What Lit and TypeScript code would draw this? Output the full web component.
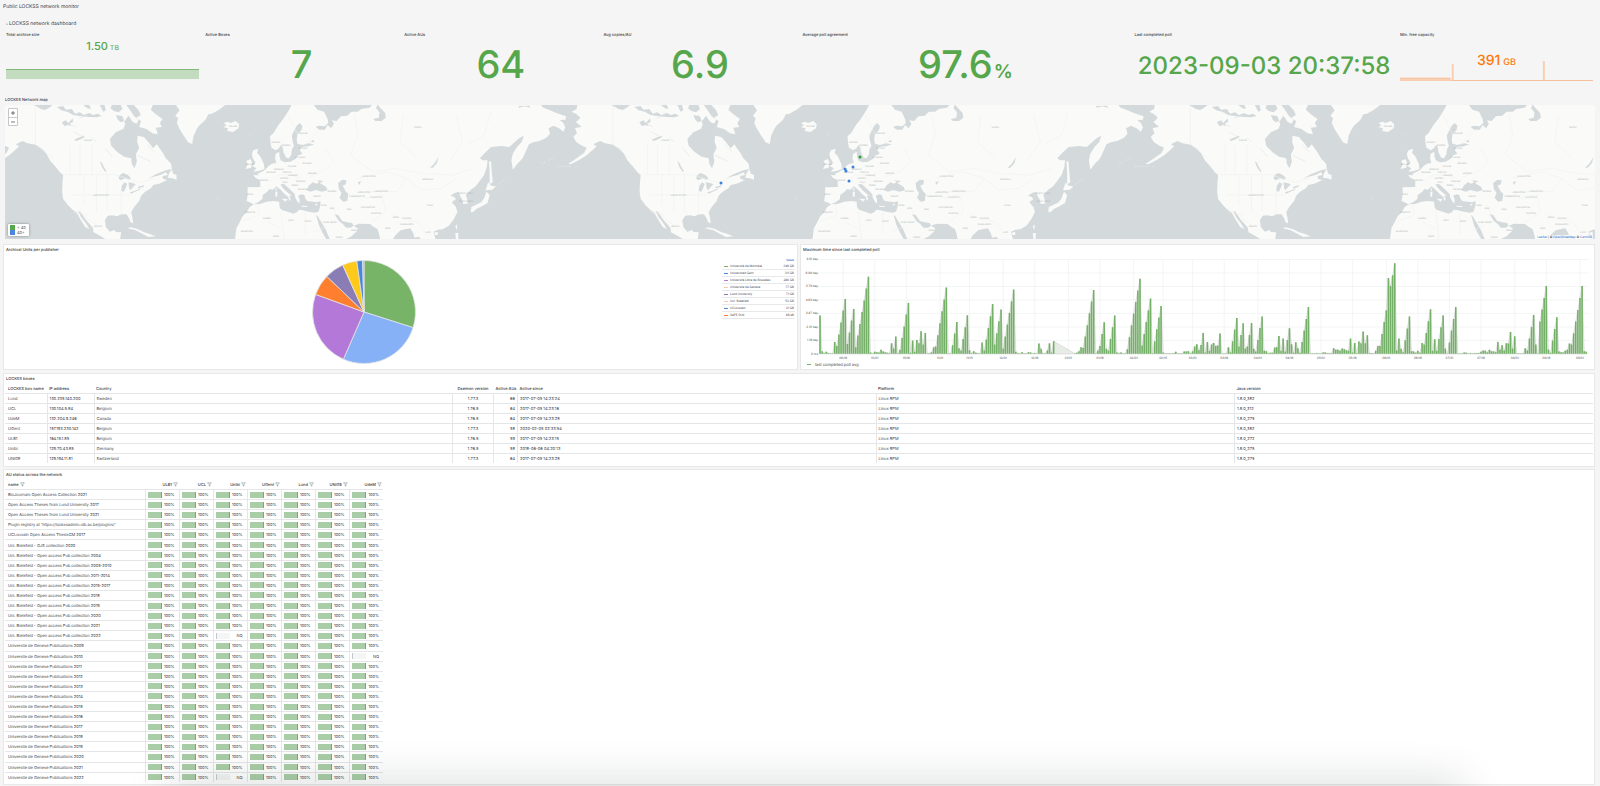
import { LitElement, html, svg, css } from "lit";
import { customElement, property } from "lit/decorators.js";

/* ---------- data ---------- */

const boxes = [
  ["Lund", "130.235.140.200", "Sweden", "1.77.3", "66", "2017-07-05 14:23:24", "Linux RPM", "1.8.0_382"],
  ["UCL", "130.104.5.84", "Belgium", "1.76.5", "64", "2017-07-05 14:23:16", "Linux RPM", "1.8.0_312"],
  ["UdeM", "132.204.9.246", "Canada", "1.76.5", "64", "2017-07-05 14:23:28", "Linux RPM", "1.8.0_275"],
  ["UGent", "157.193.230.142", "Belgium", "1.77.3", "58", "2020-02-05 02:33:54", "Linux RPM", "1.8.0_382"],
  ["ULB1", "164.15.1.85", "Belgium", "1.76.5", "59", "2017-07-05 14:23:15", "Linux RPM", "1.8.0_272"],
  ["Unibi", "129.70.43.85", "Germany", "1.76.5", "58", "2018-06-06 04:20:13", "Linux RPM", "1.8.0_275"],
  ["UNIGE", "129.194.11.81", "Switzerland", "1.77.3", "64", "2017-07-05 14:23:28", "Linux RPM", "1.8.0_275"],
];

const boxColumns = ["LOCKSS box name", "IP address", "Country", "Daemon version", "Active AUs", "Active since", "Platform", "Java version"];

const auNodes = ["ULB1", "UCL", "Unibi", "UGent", "Lund", "UNIGE", "UdeM"];

const auNames = [
  "BioJournals Open Access Collection 2021",
  "Open Access Theses from Lund University 2017",
  "Open Access Theses from Lund University 2021",
  "Plugin registry at 'https://lockssadmin.ulb.ac.be/plugins/'",
  "UCLouvain Open Access ThesisCM 2017",
  "Uni. Bielefeld - OJS collection 2020",
  "Uni. Bielefeld - Open access Pub collection 2004",
  "Uni. Bielefeld - Open access Pub collection 2005-2010",
  "Uni. Bielefeld - Open access Pub collection 2011-2014",
  "Uni. Bielefeld - Open access Pub collection 2015-2017",
  "Uni. Bielefeld - Open access Pub collection 2018",
  "Uni. Bielefeld - Open access Pub collection 2019",
  "Uni. Bielefeld - Open access Pub collection 2020",
  "Uni. Bielefeld - Open access Pub collection 2021",
  "Uni. Bielefeld - Open access Pub collection 2022",
  ...Array.from({ length: 14 }, (_, i) => `Universite de Geneve Publications ${2009 + i}`),
];

const notQueried = new Set(["Uni. Bielefeld - Open access Pub collection 2022|Unibi", "Universite de Geneve Publications 2010|UdeM", "Universite de Geneve Publications 2022|Unibi"]);

const publishers = [
  { name: "Université de Montréal", value: "349 GB", size: 349, fill: "#77b468", mark: "#77b468" },
  { name: "Universiteit Gent", value: "311 GB", size: 311, fill: "#86b1f7", mark: "#4a86db" },
  { name: "Université Libre de Bruxelles", value: "280 GB", size: 280, fill: "#b478d9", mark: "#b478d9" },
  { name: "Universite de Geneve", value: "77 GB", size: 77, fill: "#ff7f2f", mark: "#fbc7a8" },
  { name: "Lund University", value: "71 GB", size: 71, fill: "#8a7cb4", mark: "#8a7cb4" },
  { name: "Uni. Bielefeld", value: "53 GB", size: 53, fill: "#ffc91b", mark: "#fbc7a8" },
  { name: "UCLouvain", value: "21 GB", size: 21, fill: "#4a86db", mark: "#4a86db" },
  { name: "SAFE PLN", value: "98 kB", size: 5, fill: "#86b1f7", mark: "#ff7f2f" },
];

/* daily values, -1 marks a day without samples; 283 is the top of the scale */
const polls = [
  115, 8, 2, 6, 2, 1, 1, 36, 24, 58, 94, 130, 165, 30, 64, 100, 135, 20, 55, 90, 126, 160, 196, 232, 4, 1, 6, 5, 4, 12, 7, 5, 3, 2, 32, 16, 52, 2, 12, 48,
  82, 118, 153, 3, 40, 6, 42, 32, 68, 28, 63, 1, 2, 5, 20, 22, 56, 92, 128, 163, 199, 1, 1, 26, 61, 96, 17, 10, 45, 80, 116, 11, 2, 8, 3, 2, 1, 34, 10, 43,
  78, 113, 150, 28, 62, 98, 133, 16, 52, 88, 123, 158, 193, 6, 2, 1, 5, 1, 1, 5, 4, 1, 2, 1, 31, 15, 1, 1, 10, 32, 4, 38, -1, -1, -1, -1, -1, -1, -1, -1,
  -1, 1, 3, 8, 20, 18, 52, 86, 122, 157, 192, 1, 10, 24, 60, 95, 15, 10, 45, 80, 115, 4, 2, 4, 1, 1, 14, 50, 86, 121, 156, 190, 226, 25, 60, 96, 131, 166, 2, 38,
  74, 109, 144, 4, 1, 1, 1, 1, 2, 6, 1, 1, 1, 7, 7, 8, 2, 8, 22, 29, 11, 27, 63, 4, 36, 9, 28, 33, 24, 25, 61, 1, 1, 1, 20, 5, 38, 73, 108, 22,
  57, 92, 16, 22, 57, 93, 15, 7, 42, 78, 112, 9, 8, 2, 3, 3, 19, 20, 54, 9, 46, 7, 42, 77, 29, 3, 35, 17, 3, 36, 70, 105, 141, 1, 1, 1, 2, 1, 1, 4,
  4, 2, 2, 2, 17, 12, 12, 9, 16, 14, 11, 9, 46, 4, 33, 2, 37, 32, 67, 32, 56, 2, 2, 1, 9, 24, 24, 60, 96, 131, 228, 204, 236, 272, 10, 46, 15, 5, 41, 76,
  112, 8, 7, 3, 9, 3, 33, 28, 63, 98, 134, 9, 44, 9, 45, 80, 115, 16, 1, 34, 70, 105, 141, 1, 1, 1, 4, 3, 1, 2, 1, 2, 2, 2, 6, 10, 9, 5, 12, 8,
  7, 5, 36, 12, 26, 10, 32, 31, 66, 16, 53, 1, 1, 1, 1, 17, 10, 46, 81, 117, 28, 1, 97, 133, 168, 204, 13, 3, 40, 75, 110, 7, 5, 4, 9, 12, 31, 28, 62, 97,
  132, 168, 204, 8, 6,
];

const yLabels = ["8.10 day", "6.94 day", "5.79 day", "4.63 day", "3.47 day", "2.31 day", "1.16 day", "0 ms"];

const xTicks: [string, number][] = [
  ["09/16", 11], ["10/01", 26], ["10/16", 41], ["11/01", 57], ["11/15", 71], ["12/01", 87], ["12/16", 102], ["01/01", 118],
  ["01/16", 133], ["02/01", 149], ["02/15", 163], ["03/01", 177], ["03/16", 192], ["04/01", 208], ["04/16", 223], ["05/01", 238],
  ["05/16", 253], ["06/01", 269], ["06/16", 284], ["07/01", 299], ["07/16", 314], ["08/01", 330], ["08/16", 345], ["09/01", 361],
];

/* ---------- stat panel ---------- */

@customElement("stat-panel")
class StatPanel extends LitElement {
  static styles = css`
    :host { display: flex; flex-direction: column; min-width: 0; padding: 0 2px 0 4px; color: #56a64b; }
    .title { margin: 0; font-size: 4px; line-height: 9px; font-weight: 500; color: #43474d; }
    .value { flex: 1; display: flex; justify-content: center; align-items: center; font-weight: 500; white-space: nowrap; padding-bottom: 3px; }
    .value.huge { font-size: 38px; }
    .value.long { font-size: 24px; }
    .value.small { font-size: 11px; align-items: flex-start; padding: 0; line-height: 14px; }
    .value.medium { font-size: 14px; align-items: flex-start; padding: 15px 0 0; line-height: 14px; color: #ff780a; }
    .unit { margin-left: 1px; }
    .line { display: flex; align-items: baseline; }
    .huge .unit { font-size: 19px; font-weight: 600; }
    .small .unit { font-size: 7px; margin-left: 2px; opacity: 0.8; }
    .medium .unit { font-size: 9px; margin-left: 3px; }
  `;
  @property() label = "";
  @property() value = "";
  @property() unit = "";
  @property() size = "huge";
  render() {
    return html`<h3 class="title">${this.label}</h3>
      <div class="value ${this.size}">
        <span class="line"><span>${this.value}</span>${this.unit ? html`<span class="unit">${this.unit}</span>` : ""}</span>
      </div>
      <slot></slot>`;
  }
}

/* ---------- world map ---------- */

const americas = "M532 28 530 42 515 50 530 58 541 68 528 82 545 95 525 100 531 115 520 125 528 140 542 150 560 158 552 174 530 190 505 206 512 208 536 196 560 181 578 165 590 154 580 148 600 138 615 145 640 149 660 162 672 176 682 196 700 216 712 232 722 240 720 262 719 290 722 312 738 332 752 346 762 352 772 370 788 396 801 403 790 385 775 365 767 349 774 350 788 372 802 388 811 398 813 412 835 424 850 433 893 433 896 412 880 411 876 405 862 410 850 396 847 375 856 362 870 361 884 364 896 358 912 358 920 370 924 382 932 385 930 368 926 352 935 336 950 318 956 302 968 290 985 280 992 270 1010 266 1020 262 1034 255 1022 252 1020 243 1036 240 1030 232 1014 240 990 246 975 252 1000 238 1030 226 1048 222 1046 206 1030 190 1020 172 1010 158 1003 148 992 160 978 142 964 126 945 122 944 140 950 160 940 178 943 200 936 220 928 206 926 190 905 185 885 172 866 152 862 132 880 112 900 103 912 95 905 80 918 62 930 80 942 86 948 76 934 62 922 44 910 28Z M955 60 948 45 932 28 992 28 985 44 1000 58 1020 72 1012 84 1018 96 1000 98 1006 118 990 115 972 102 950 96 956 78 940 70Z M1036 248 1040 234 1048 222 1052 236 1062 240 1062 254 1050 250Z M915 400 925 397 945 402 965 412 976 415 1000 424 978 426 962 418 940 406Z";

const arcticWater = "M633 30 690 30 680 38 668 45 655 42 645 36Z M703 36 722 33 730 44 748 42 758 56 772 52 784 60 800 54 812 60 826 56 838 63 822 67 800 66 776 64 752 60 734 50 716 46Z M782 30 800 30 806 42 795 40Z M832 30 846 30 850 46 842 50Z M868 30 895 30 900 42 888 52 874 48 864 40Z M880 60 900 64 905 78 894 82 886 74Z M908 88 925 92 934 104 920 108 904 100Z M718 82 730 76 738 84 750 70 752 80 742 86 746 94 736 90 726 94Z M755 134 768 128 784 122 786 126 772 134 760 138Z M832 198 838 204 842 214 852 228 848 230 838 216Z M892 240 902 234 916 240 926 250 918 254 908 250 894 256 888 250Z M906 262 898 272 896 288 904 290 910 278 914 266Z M918 262 930 264 940 268 932 276 924 286 920 280Z M922 292 936 288 954 280 952 284 938 290 926 296Z M945 276 966 270 962 276 948 280Z";

const greenland = "M500 28 644 28 630 40 622 46 604 56 594 58 586 74 576 84 566 94 560 104 552 122 548 147 536 142 524 122 512 102 504 84 508 70 500 62 512 46Z M636 96 646 92 638 84 648 80 658 84 672 78 682 88 680 100 664 111 648 108 650 100Z";

const eurasia = "M832 28 824 45 815 60 806 74 794 90 780 114 770 124 771 142 774 158 786 166 795 160 801 150 806 156 808 172 816 188 824 190 831 178 832 164 838 152 834 138 832 122 838 108 846 92 854 84 862 92 860 104 848 118 846 134 848 146 862 150 880 145 896 148 880 154 858 156 855 166 862 176 848 182 842 192 828 200 812 202 800 196 797 184 796 170 786 176 784 190 788 204 775 206 765 214 756 224 744 232 734 236 737 241 722 240 728 248 742 256 742 276 706 277 706 300 703 318 716 324 722 328 736 322 748 312 749 300 762 290 768 282 778 284 788 274 800 284 812 298 822 306 825 318 829 312 824 302 832 303 815 288 804 276 800 267 811 268 828 284 840 297 842 308 848 320 854 326 854 312 850 302 860 298 868 300 870 310 876 318 892 320 904 322 914 318 913 334 908 350 898 353 880 350 864 346 852 344 846 352 836 356 820 350 802 344 797 336 796 320 780 318 760 320 742 327 724 328 712 336 704 350 692 364 682 384 674 400 670 433 935 433 985 433 1002 424 1018 408 1020 400 1008 392 1024 386 1055 387 1066 396 1076 402 1080 414 1084 433 1120 433 1126 422 1142 406 1158 402 1170 400 1178 414 1182 428 1194 425 1200 433 1242 433 1238 420 1236 410 1248 404 1262 403 1280 392 1294 372 1304 352 1300 336 1288 322 1300 312 1294 305 1284 302 1296 294 1308 290 1312 304 1318 314 1321 328 1334 325 1331 310 1328 300 1342 284 1356 274 1366 260 1380 240 1388 216 1390 196 1376 196 1368 190 1384 172 1400 156 1430 153 1452 156 1462 146 1480 130 1493 122 1488 140 1474 156 1462 176 1458 196 1462 224 1474 208 1490 190 1498 172 1508 148 1520 142 1538 138 1558 128 1568 116 1564 100 1578 92 1594 100 1606 110 1612 97 1606 84 1596 75 1612 74 1614 64 1588 55 1568 46 1549 38 1540 28Z M722 166 736 161 733 174 742 184 752 206 754 222 738 228 722 230 731 220 719 213 729 204 721 190 718 178Z M702 198 714 192 719 204 716 218 700 222 706 208Z M1342 352 1344 336 1356 330 1372 322 1380 310 1387 290 1396 300 1390 324 1374 334 1358 342 1350 350Z M1384 286 1392 262 1400 272 1414 274 1404 284Z M1394 198 1400 200 1402 230 1405 262 1396 268 1396 230Z M1298 394 1304 388 1302 406Z M1238 413 1248 410 1248 420 1240 420Z M1298 414 1307 414 1306 433 1300 433Z M803 311 820 312 814 320Z M785 290 791 290 790 306 785 304Z M786 280 789 278 789 288 786 286Z M860 332 876 333 876 336 860 335Z M897 328 906 326 902 332Z";

const innerWater = "M893 28 905 44 924 50 934 72 936 84 926 94 908 92 900 96 910 104 926 104 934 90 944 100 952 86 946 76 960 78 972 64 990 62 1002 50 1020 50 1030 42 1054 38 1062 28Z M1076 28 1084 38 1098 54 1100 68 1088 78 1070 78 1064 72 1080 68 1082 52 1072 40Z M1478 33 1510 32 1512 38 1496 34 1480 38Z M874 286 880 272 892 262 902 266 910 262 904 256 922 258 912 264 930 276 934 286 918 290 900 285 886 290Z M964 264 976 254 988 256 986 268 977 272 986 290 993 296 990 318 978 320 968 308 974 294 966 282Z M901 360 906 364 914 378 928 402 940 432 930 432 920 414 910 392Z M954 358 964 360 976 378 990 382 1004 384 1008 392 1000 398 986 398 978 388 966 378Z M1226 218 1238 206 1250 186 1246 204 1234 218Z M1020 262 1030 258 1024 270Z M885 140 894 134 896 142Z";

const borders = "M101 30V148L150 190 M183 239H330L360 250 400 262 440 250 M250 360 210 352 M236 360 262 382 276 390 M200 150V239 M228 150V239 M262 150V239 M205 300H370 M240 240V330 M275 240V350 M305 240V350 M345 290V360 M1010 60 1020 120 1000 180 1060 230 1130 220 1200 235 1290 240 1350 220 M1020 250 1100 230 1160 250 1130 290 1040 290 M1160 250 1200 285 1260 280 1300 250 M1040 310 1090 300 1100 350 1060 380 M1120 360 1160 375 1190 380 1210 410 M930 160 950 200 920 230 880 245 M770 260 790 240 830 240 860 250 M800 350 810 432 M870 350V420 M735 330 740 360 690 380 M760 380 800 400 M900 410 940 390 M945 330 960 360 M1150 60 1140 140 1190 190 M1300 60 1320 140 1280 200 M1400 50 1380 120 1330 150 M820 60 850 120 M905 110 870 150";

const specks = "M190 85 215 95 M210 110 240 128 M225 70 250 60 M262 128 275 140 M300 160 320 185 M290 202 300 226 M345 60 352 74 M390 180 430 200 M420 150 440 170";

const countries: [string, number, number][] = [
  ["CANADA", 88, 141], ["UNITED STATES", 101, 196], ["MEXICO", 98, 227], ["ICELAND", 233, 127], ["NORWAY", 276, 143], ["SWEDEN", 286, 146],
  ["FINLAND", 303, 134], ["ESTONIA", 303, 149], ["LITHUANIA", 300, 158], ["BELARUS", 307, 164], ["POLAND", 292, 167], ["GERMANY", 279, 170],
  ["UKRAINE", 312, 174], ["CZECHIA", 287, 173], ["AUSTRIA", 284, 179], ["HUNGARY", 293, 176], ["ROMANIA", 301, 182], ["FRANCE", 264, 181],
  ["SPAIN", 250, 195], ["ITALY", 285, 183], ["SERBIA", 295, 186], ["BULGARIA", 303, 190], ["TURKEY", 317, 197], ["MOROCCO", 250, 213],
  ["ALGERIA", 267, 219], ["LIBYA", 291, 221], ["EGYPT", 308, 222], ["MAURITANIA", 247, 232], ["NIGER", 276, 237], ["SAUDI ARABIA", 330, 223],
  ["IRAQ", 332, 209], ["IRAN", 349, 210], ["SYRIA", 324, 206], ["KAZAKHSTAN", 369, 177], ["UZBEKISTAN", 364, 193], ["KYRGYZSTAN", 381, 192],
  ["TURKMENISTAN", 357, 197], ["TAJIKISTAN", 376, 198], ["AFGHANISTAN", 368, 208], ["PAKISTAN", 376, 214], ["RUSSIA", 418, 128],
  ["MONGOLIA", 428, 180], ["CHINA", 430, 206], ["INDIA", 388, 229], ["NEPAL", 396, 218], ["BHUTAN", 407, 219], ["BANGLADESH", 407, 225],
  ["LAOS", 428, 233], ["SOUTH KOREA", 466, 202], ["NORTH KOREA", 466, 194], ["OMAN", 354, 231], ["YEMEN", 339, 238], ["GEORGIA", 332, 192],
  ["IRELAND", 250, 165], ["BELGIUM", 271, 173],
];

const boxPins: [number, number, string][] = [
  [721, 183, "#3b82e0"], [853, 167, "#3b82e0"], [845, 169, "#3b82e0"], [846, 171, "#3b82e0"], [849, 181, "#3b82e0"], [860, 157, "#2f9e2a"],
];

@customElement("network-map")
class NetworkMap extends LitElement {
  static styles = css`
    :host { display: block; position: relative; }
    .world { display: block; width: 100%; height: 134px; background: #d4dadc; }
    .zoom { position: absolute; left: 3px; top: 3px; display: flex; flex-direction: column; border: 1px solid #c4c8ca; border-radius: 1px; background: #fff; }
    .zoom button { all: unset; box-sizing: border-box; width: 8px; height: 8px; display: grid; place-items: center; cursor: pointer; }
    .zoom button + button { border-top: 1px solid #ccc; }
    .zoom svg { width: 4px; height: 4px; }
    .legend { position: absolute; left: 3px; bottom: 3px; display: grid; grid-template-columns: 5px auto; column-gap: 2px; align-items: center; margin: 0; padding: 1px 3px 1px 2px; background: #fff; border-radius: 1px; box-shadow: 0 0 3px rgba(0, 0, 0, 0.4); font-size: 4px; line-height: 5px; color: #555; list-style: none; }
    .legend li { display: contents; }
    .key { align-self: stretch; }
    .low { background: #56a64b; }
    .high { background: #4a86db; }
    .credit { position: absolute; right: 2px; bottom: 0; padding: 0 1px; background: rgba(255, 255, 255, 0.7); font-size: 3px; line-height: 4px; color: #333; }
    .credit a { color: #1f62c9; text-decoration: none; }
  `;
  render() {
    const shifts = [-577.5, 0, 577.5, 1155];
    return html`<svg class="world" viewBox="5 105 1590 134" preserveAspectRatio="xMidYMid slice" role="img" aria-label="World map of LOCKSS boxes">
        <defs>
          <g id="world">
            <g transform="translate(-177.5 95) scale(.33333)">
              <path d=${americas} fill="#fafaf8" /><path d=${arcticWater} fill="#d4dadc" />
            </g>
            <g transform="translate(0 95) scale(.35075 .33333)">
              <path d=${greenland + eurasia} fill="#fafaf8" /><path d=${innerWater} fill="#d4dadc" />
              <path d=${borders} fill="none" stroke="#f0f1f0" stroke-width="1.5" />
              <path d=${specks} fill="none" stroke="#dde1e2" stroke-width="1.5" />
              <path d="M1563 196l14-8M1545 205l12-6M1640 215h4M1590 214h40M712 120l3 3M620 310l6 2M1420 268l18-14" fill="none" stroke="#f3f4f3" stroke-width="2" stroke-dasharray="3 4" />
            </g>
            <g font-size="2" fill="#a9b1b3" text-anchor="middle">
              ${countries.map(([n, x, y]) => svg`<text x=${x} y=${y}>${n}</text>`)}
            </g>
          </g>
        </defs>
        ${shifts.map((s) => svg`<use href="#world" x=${s} />`)}
        ${boxPins.map(([x, y, c]) => svg`<circle cx=${x} cy=${y} r="1.5" fill=${c} />`)}
      </svg>
      <div class="zoom">
        <button aria-label="Zoom in"><svg viewBox="0 0 4 4"><path d="M0 2h4M2 0v4" stroke="#444" stroke-width=".7" /></svg></button>
        <button aria-label="Zoom out"><svg viewBox="0 0 4 4"><path d="M0 2h4" stroke="#444" stroke-width=".7" /></svg></button>
      </div>
      <ul class="legend">
        <li><span class="key low"></span><span>&lt; 40</span></li>
        <li><span class="key high"></span><span>40+</span></li>
      </ul>
      <div class="credit"><a href="#leaflet">Leaflet</a> | © <a href="#osm">OpenStreetMap</a> © <a href="#carto">CartoDB</a></div>`;
  }
}

/* ---------- publisher pie ---------- */

@customElement("publisher-pie")
class PublisherPie extends LitElement {
  static styles = css`
    :host { flex: 1; display: grid; grid-template-columns: 1fr auto; padding: 0 2px; }
    .pie { justify-self: center; width: 104px; height: 104px; margin-top: 6px; }
    .legend { align-self: start; width: 73px; margin-top: 3px; border-collapse: collapse; font-size: 3px; line-height: 6px; }
    .legend th, .legend td { padding: 0; font-weight: 400; text-align: left; white-space: nowrap; }
    .legend tbody tr { border-bottom: 1px solid #e8e9ea; }
    .legend .num { text-align: right; padding-right: 1px; }
    .legend thead .num { color: #1f62c9; font-weight: 500; }
    .mark { display: inline-block; width: 4px; height: 1px; margin: 0 2px; vertical-align: middle; }
  `;
  render() {
    const total = publishers.reduce((a, p) => a + p.size, 0);
    let angle = 0;
    const point = (a: number) => `${52 + 51.5 * Math.sin(a)} ${52 - 51.5 * Math.cos(a)}`;
    return html`<svg class="pie" viewBox="0 0 104 104" role="img" aria-label="Archival Units per publisher">
        ${publishers.map((p) => {
          const start = angle;
          angle += (p.size / total) * Math.PI * 2;
          return svg`<path d="M52 52L${point(start)}A51.5 51.5 0 0 1 ${point(angle)}Z" fill=${p.fill} stroke="#e3e4e4" stroke-width=".8" />`;
        })}
      </svg>
      <table class="legend">
        <thead><tr><th></th><th class="num">Value</th></tr></thead>
        <tbody>
          ${publishers.map((p) => html`<tr><td><span class="mark" style="background:${p.mark}"></span>${p.name}</td><td class="num">${p.value}</td></tr>`)}
        </tbody>
      </table>`;
  }
}

/* ---------- poll chart ---------- */

@customElement("poll-chart")
class PollChart extends LitElement {
  static styles = css`
    :host { display: block; padding: 1px 2px 0; }
    .plot { display: block; width: 100%; }
    .key { display: flex; align-items: center; gap: 4px; margin: 2px 0 0 4px; font-size: 4px; line-height: 6px; }
    .mark { width: 4px; height: 1px; background: #77b468; }
  `;
  render() {
    const left = 16, base = 99;
    const px = (i: number) => left + 1 + i * 2.108;
    const py = (v: number) => base - v / 3;
    const known = polls.map((v, i) => [v, i]).filter(([v]) => v >= 0);
    const area = `M${px(0)} ${base}` + known.map(([v, i]) => `L${px(i)} ${py(v)}`).join("") + `V${base}Z`;
    const bars = known.map(([v, i]) => `M${px(i) - 0.8} ${base}V${py(v)}h1.6V${base}z`).join("");
    return html`<svg class="plot" viewBox="0 0 790 105" role="img" aria-label="Maximum time since last completed poll">
        ${yLabels.map((t, k) => svg`<path d="M${left - 1} ${4.5 + k * 13.5}H787" stroke="#f0f1f1" stroke-width=".8" />
          <text x="15" y=${5.5 + k * 13.5} font-size="3" fill="#43474d" text-anchor="end">${t}</text>`)}
        ${xTicks.map(([t, d]) => svg`<path d="M${px(d)} 4.5V${base}" stroke="#f0f1f1" stroke-width=".8" />
          <text x=${px(d)} y="104" font-size="3" fill="#43474d" text-anchor="middle">${t}</text>`)}
        <path d=${area} fill="#e8ece7" stroke="#cfd4cf" stroke-width=".6" />
        <path d=${bars} fill="#74b067" />
      </svg>
      <div class="key"><span class="mark"></span><span>last completed poll avg</span></div>`;
  }
}

/* ---------- page ---------- */

@customElement("app-root")
class AppRoot extends LitElement {
  static styles = css`
    :host { display: flex; flex-direction: column; position: relative; box-sizing: border-box; min-height: 100vh; padding: 0 5px 1px 3px; overflow: hidden; background: #f5f5f5; color: #3c4046; font-family: Inter, "Liberation Sans", sans-serif; font-size: 4px; text-rendering: geometricPrecision; }
    .page-title { margin: 0; font-size: 5px; line-height: 15px; font-weight: 400; }
    .row-toggle { all: unset; display: flex; align-items: center; gap: 1px; width: max-content; margin: 4px 0 1px 3px; font-size: 5px; line-height: 10px; cursor: pointer; }
    .row-toggle svg { width: 2px; height: 2px; }
    .stats { display: grid; grid-template-columns: 3fr 3fr 3fr 3fr 5fr 4fr 3fr; height: 64px; margin: 0 0 0 -1px; }
    .spark { display: block; width: 100%; }
    .spark.flat { height: 10px; margin-bottom: 15px; }
    .spark.spiky { height: 21px; margin: -21px 0 13px; }
    .map-panel { padding: 0 0 5px 2px; }
    .panel-title { margin: 0; font-size: 4px; line-height: 11px; font-weight: 500; }
    .charts { display: grid; grid-template-columns: 1fr 1fr; gap: 2px; }
    .panel { display: flex; flex-direction: column; box-sizing: border-box; background: #fff; border: 1px solid #e7e8e9; }
    .charts .panel { height: 126px; }
    .panel > .panel-title { padding-left: 2px; line-height: 9px; }
    .boxes { margin-top: 3px; height: 94px; }
    .status { margin-top: 2px; flex: 1; }
    table { border-collapse: collapse; table-layout: fixed; }
    th, td { padding: 0 2px; font-weight: 400; text-align: left; white-space: nowrap; overflow: hidden; line-height: 9px; }
    th:first-child, td:first-child { padding-left: 3px; }
    th { font-weight: 500; }
    thead tr, tbody tr:not(:last-child) { border-bottom: 1px solid #e4e6e7; }
    tbody td:not(:last-child) { border-right: 1px solid #e4e6e7; }
    .box-table { width: 100%; }
    .box-table .center { text-align: center; }
    .box-table .num { text-align: right; }
    .c-name { width: 42px; } .c-ip { width: 47px; } .c-daemon { width: 41px; } .c-aus { width: 24px; }
    .c-au { width: 140px; } .c-node { width: 34px; }
    .inset { flex: 1; display: flex; padding: 1px 1px 2px; }
    .boxes .inset { padding-bottom: 3px; }
    .au-table { width: 378px; }
    .au-table .node { text-align: right; padding-right: 1px; }
    .filter { all: unset; display: inline-block; width: 5px; height: 5px; margin-left: 1px; vertical-align: middle; cursor: pointer; }
    .filter svg { display: block; }
    .gauge { display: flex; align-items: center; justify-content: space-between; padding-right: 2px; }
    .bar { box-sizing: border-box; width: 14px; height: 6px; background: #a9cda6; border-right: 1px solid #73b066; }
    .bar.empty { background: #f4f5f5; border-right: 0; border-left: 1px solid #c6c9cb; }
    .shade { position: absolute; left: 170px; right: 140px; top: 100%; height: 20px; box-shadow: 0 0 42px 2px rgba(60, 66, 66, 0.24); pointer-events: none; }
  `;

  private filterButton(name: string) {
    return html`<button class="filter" aria-label="Filter ${name}">
      <svg viewBox="0 0 5 5"><path d="M.6 .8H4.4L2.9 2.7V4.2L2.1 3.8V2.7Z" fill="none" stroke="#7a7f85" stroke-width=".5" /></svg>
    </button>`;
  }

  render() {
    const boxClass = ["", "", "", "center", "num", "", "", ""];
    return html`
      <h1 class="page-title">Public LOCKSS network monitor</h1>
      <button class="row-toggle"><svg viewBox="0 0 4 4"><path d="M0 1 2 3 4 1" fill="none" stroke="#43474d" /></svg>LOCKSS network dashboard</button>
      <section class="stats">
        <stat-panel label="Total archive size" value="1.50" unit="TB" size="small">
          <svg class="spark flat" viewBox="0 0 100 10" preserveAspectRatio="none"><path d="M0 0H100V10H0Z" fill="#c3dcbf" /><path d="M0 .5H100" stroke="#7fb877" /></svg>
        </stat-panel>
        <stat-panel label="Active Boxes" value="7"></stat-panel>
        <stat-panel label="Active AUs" value="64"></stat-panel>
        <stat-panel label="Avg copies/AU" value="6.9"></stat-panel>
        <stat-panel label="Average poll agreement" value="97.6" unit="%"></stat-panel>
        <stat-panel label="Last completed poll" value="2023-09-03 20:37:58" size="long"></stat-panel>
        <stat-panel label="Min. free capacity" value="391" unit="GB" size="medium">
          <svg class="spark spiky" viewBox="0 0 196 21" preserveAspectRatio="none">
            <path d="M0 18H51L52 20H52.500V4H54.500V20H145V1H147V20H196V21H0Z" fill="#f9cfb4" />
            <path d="M0 18H51M52 20.500H196" fill="none" stroke="#f6b48c" stroke-width=".6" />
          </svg>
        </stat-panel>
      </section>

      <section class="map-panel">
        <h2 class="panel-title">LOCKSS Network map</h2>
        <network-map></network-map>
      </section>

      <div class="charts">
        <section class="panel"><h2 class="panel-title">Archival Units per publisher</h2><publisher-pie></publisher-pie></section>
        <section class="panel"><h2 class="panel-title">Maximum time since last completed poll</h2><poll-chart></poll-chart></section>
      </div>

      <section class="panel boxes">
        <h2 class="panel-title">LOCKSS boxes</h2>
        <div class="inset">
          <table class="box-table">
            <colgroup><col class="c-name" /><col class="c-ip" /><col /><col class="c-daemon" /><col class="c-aus" /><col /><col /><col /></colgroup>
            <thead><tr>${boxColumns.map((c, i) => html`<th class=${boxClass[i]}>${c}</th>`)}</tr></thead>
            <tbody>${boxes.map((r) => html`<tr>${r.map((v, i) => html`<td class=${boxClass[i]}>${v}</td>`)}</tr>`)}</tbody>
          </table>
        </div>
      </section>

      <section class="panel status">
        <h2 class="panel-title">AU status across the network</h2>
        <div class="inset">
          <table class="au-table">
            <colgroup><col class="c-au" />${auNodes.map(() => html`<col class="c-node" />`)}</colgroup>
            <thead><tr><th>name${this.filterButton("name")}</th>${auNodes.map((n) => html`<th class="node">${n}${this.filterButton(n)}</th>`)}</tr></thead>
            <tbody>
              ${auNames.map((name) => html`<tr><td>${name}</td>${auNodes.map((n) => {
                const missing = notQueried.has(`${name}|${n}`);
                return html`<td><div class="gauge"><span class="bar ${missing ? "empty" : ""}"></span><span>${missing ? "NQ" : "100%"}</span></div></td>`;
              })}</tr>`)}
            </tbody>
          </table>
        </div>
      </section>
      <div class="shade"></div>`;
  }
}
